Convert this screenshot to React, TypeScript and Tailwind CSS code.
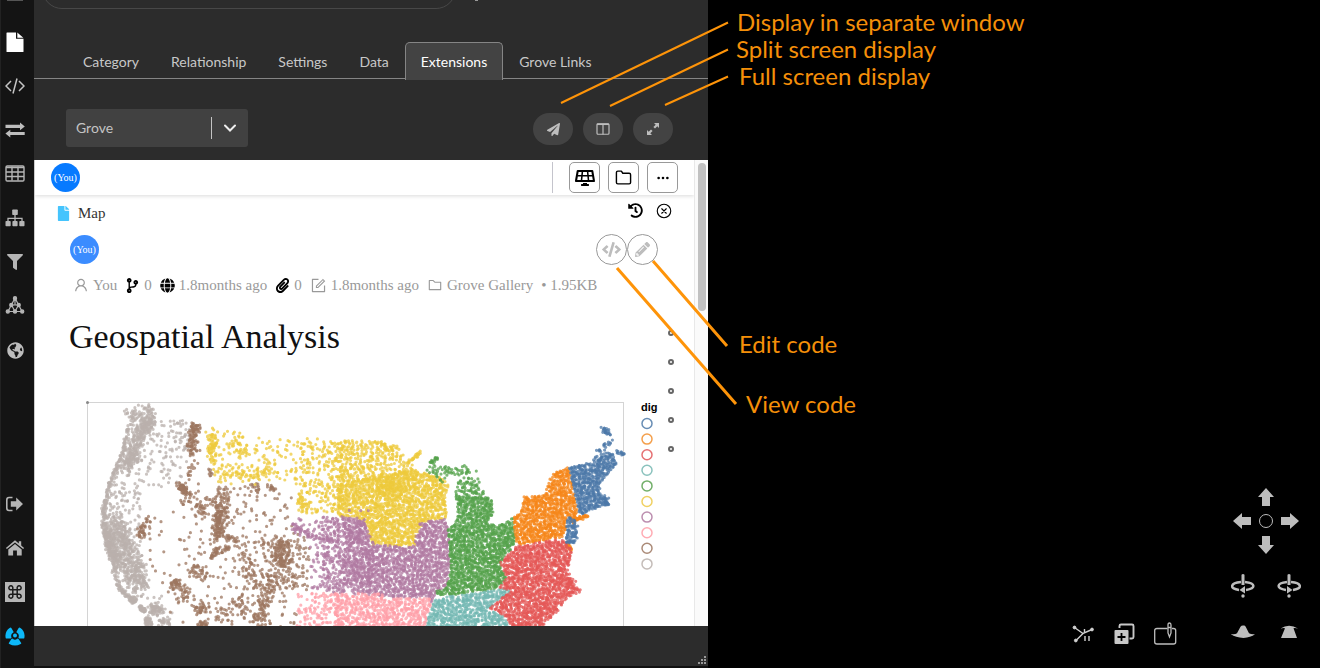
import { useMemo, useState } from "react";
import type { ReactNode } from "react";
import { AiOutlineFolder, AiOutlineForm, AiOutlineUser } from "react-icons/ai";
import { BsThreeDots } from "react-icons/bs";
import {
    FaCode,
    FaCodeBranch,
    FaFile,
    FaFilter,
    FaGlobe,
    FaGlobeAmericas,
    FaHistory,
    FaPaperclip,
    FaPaperPlane,
    FaPencilAlt,
    FaSolarPanel,
} from "react-icons/fa";
import { FiFolder } from "react-icons/fi";
import { IoCloseCircleOutline } from "react-icons/io5";

type Point = [number, number];

/* ---------- sidebar ---------- */

const sidebarTop: { label: string; icon: ReactNode }[] = [
    {
        label: "Document",
        icon: (
            <svg viewBox="0 0 20 20" className="size-5 fill-white">
                <path d="M2 .5h9v6.200h7.500V19.500q0 .5-.5.5H2q-.5 0-.5-.5V1q0-.5.5-.5z" />
                <path d="M12.300.5 18.300 5.700h-6z" />
            </svg>
        ),
    },
    {
        label: "Code",
        icon: (
            <svg viewBox="0 0 20 20" className="size-5 fill-none stroke-[#c4c4c4] stroke-[1.500]">
                <path d="M6 5 1 10l5 5M14 5l5 5-5 5M12 2.500 8 17.500" />
            </svg>
        ),
    },
    {
        label: "Exchange",
        icon: (
            <svg viewBox="0 0 20 20" className="size-5 fill-[#bdbdbd]">
                <path d="M.5 4.800h14.500V2.500l4.800 3.900-4.800 3.800V8H.5zM19.700 12H5.300V9.700L.4 13.500l4.900 3.900v-2.300h14.400z" />
            </svg>
        ),
    },
    {
        label: "Table",
        icon: (
            <svg viewBox="0 0 20 20" className="size-5 fill-none stroke-[#b5b5b5] stroke-[1.400]">
                <rect x="1" y="2" width="18" height="15" rx="1.200" />
                <path d="M1 3.500h18M1 8h18M1 12.500h18M7 2.500v14M13 2.500v14" />
            </svg>
        ),
    },
    {
        label: "Hierarchy",
        icon: (
            <svg viewBox="0 0 20 20" className="size-5 fill-[#b5b5b5]">
                <rect x="7.200" y="1.500" width="5.600" height="5.600" rx=".8" />
                <rect x=".5" y="13" width="5.200" height="5.200" rx=".8" />
                <rect x="7.400" y="13" width="5.200" height="5.200" rx=".8" />
                <rect x="14.300" y="13" width="5.200" height="5.200" rx=".8" />
                <path d="M10 7v6M3 13v-2.700h14V13" className="fill-none stroke-[#b5b5b5] stroke-[1.300]" />
            </svg>
        ),
    },
    { label: "Filter", icon: <FaFilter size={16} className="text-[#b5b5b5]" /> },
    {
        label: "Graph",
        icon: (
            <svg viewBox="0 0 20 20" className="size-5 fill-[#b5b5b5] stroke-[#b5b5b5] stroke-[1.200]">
                <path d="M10 2 3 15.500h14zM6.500 9h7M6.500 9l3.500 6.500L13.500 9M10 2v7" className="fill-none" />
                <circle cx="10" cy="2.300" r="1.600" />
                <circle cx="6.300" cy="9" r="1.600" />
                <circle cx="13.700" cy="9" r="1.600" />
                <circle cx="2.800" cy="15.500" r="1.600" />
                <circle cx="10" cy="15.500" r="1.600" />
                <circle cx="17.200" cy="15.500" r="1.600" />
            </svg>
        ),
    },
    { label: "Globe", icon: <FaGlobeAmericas size={17} className="text-[#bdbdbd]" /> },
];

const sidebarBottom: { label: string; icon: ReactNode }[] = [
    {
        label: "Sign out",
        icon: (
            <svg viewBox="0 0 20 20" className="size-5 fill-[#b5b5b5]">
                <path d="M7.500 3.500H4Q1.800 3.500 1.800 6v8q0 2.500 2.200 2.500h3.500" className="fill-none stroke-[#b5b5b5] stroke-[1.600]" />
                <path d="M5.800 7.300h5.400V3.500L18 10l-6.800 6.500v-3.800H5.800z" />
            </svg>
        ),
    },
    {
        label: "Home",
        icon: (
            <svg viewBox="0 0 20 20" className="size-5 fill-[#b5b5b5]">
                <path d="M10 2.300 13.800 5.400V3.300h2.400v4.200l2.900 2.400-1 1.200L10 4.500l-8.100 6.600-1-1.200z" />
                <path d="M10 5.900 16.700 11.400V17.500h-4.800v-5H8.100v5H3.300V11.400z" />
            </svg>
        ),
    },
    {
        label: "Shortcuts",
        icon: (
            <svg viewBox="0 0 20 20" className="size-5">
                <rect width="20" height="20" className="fill-[#b5b5b5]" />
                <path
                    d="M7.800 7.800h4.400v4.400H7.800zM7.800 7.800H6.300a2 2 0 1 1 1.500-1.500zM12.200 7.800V6.300a2 2 0 1 1 1.500 1.500zM12.200 12.200h1.500a2 2 0 1 1-1.500 1.500zM7.800 12.200v1.500a2 2 0 1 1-1.500-1.500z"
                    className="fill-none stroke-[#1a1a1a] stroke-[1.500]"
                />
            </svg>
        ),
    },
    {
        label: "Grove",
        icon: (
            <svg viewBox="0 0 20 20" className="size-5 fill-[#0db8f8] stroke-[#0db8f8] stroke-2" strokeLinejoin="round">
                <path d="M1.600 11.500A9 9 0 0 1 5.500 2.500L7.500 6A4.500 4.500 0 0 0 5.500 11.500z" />
                <path d="M18.400 11.500A9 9 0 0 0 14.500 2.500L12.500 6a4.500 4.500 0 0 1 2 5.500z" />
                <path d="M4.800 17.200q5.200 2.800 10.400 0L12.800 13.600a4.500 4.500 0 0 1-5.600 0z" />
                <circle cx="10" cy="9.600" r="1" />
            </svg>
        ),
    },
];

function SidebarButton({ label, children }: { label: string; children: ReactNode }) {
    return (
        <button aria-label={label} className="flex size-6 items-center justify-center">
            {children}
        </button>
    );
}

function Sidebar() {
    return (
        <aside className="flex flex-col justify-between border-l border-[#222] bg-[#141414] pr-[5px] pb-5">
            <div className="flex flex-col items-center gap-5">
                <span className="mb-[9px] h-px w-4 bg-[#555]" />
                {sidebarTop.map((item) => (
                    <SidebarButton key={item.label} label={item.label}>
                        {item.icon}
                    </SidebarButton>
                ))}
            </div>
            <div className="flex flex-col items-center gap-5">
                {sidebarBottom.map((item) => (
                    <SidebarButton key={item.label} label={item.label}>
                        {item.icon}
                    </SidebarButton>
                ))}
            </div>
        </aside>
    );
}

/* ---------- dot map ---------- */

type Region = {
    color: string;
    // outline, grid step in px, chance that a grid cell holds a dot at the west and east ends
    areas: { outline: Point[]; step: number; west: number; east: number }[];
    trails: { line: Point[]; spread: number; count: number }[];
};

const regions: Region[] = [
    {
        color: "#bab0ac",
        areas: [
            { outline: [[129, 414], [152, 416], [192, 422], [190, 450], [180, 487], [143, 490], [112, 484], [124, 450]], step: 4, west: 0.6, east: 0.42 },
            { outline: [[165, 418], [192, 422], [189, 450], [165, 455]], step: 4, west: 0.45, east: 0.9 },
            { outline: [[110, 482], [141, 486], [140, 523], [143, 557], [150, 590], [128, 590], [108, 543], [103, 507]], step: 3, west: 0.65, east: 0.3 },
            { outline: [[145, 594], [166, 595], [177, 607], [170, 626], [150, 622]], step: 4, west: 0.45, east: 0.35 },
        ],
        trails: [
            { line: [[128, 413], [133, 418], [146, 409], [150, 413], [146, 428]], spread: 7, count: 90 },
            { line: [[150, 420], [140, 432], [133, 452], [127, 467]], spread: 9, count: 340 },
            { line: [[128, 425], [123, 452], [110, 482], [104, 510]], spread: 2, count: 130 },
            { line: [[104, 500], [104, 528], [111, 555], [119, 588], [133, 601]], spread: 3, count: 220 },
            { line: [[130, 599], [135, 601]], spread: 4, count: 40 },
            { line: [[140, 607], [144, 611]], spread: 3, count: 30 },
            { line: [[147, 618], [149, 626]], spread: 4, count: 50 },
            { line: [[112, 520], [124, 540], [132, 566], [140, 588]], spread: 13, count: 480 },
            { line: [[107, 530], [117, 566]], spread: 7, count: 220 },
            { line: [[153, 607], [159, 612]], spread: 7, count: 70 },
            { line: [[158, 620], [168, 624]], spread: 6, count: 30 },
        ],
    },
    {
        color: "#9c755f",
        areas: [
            { outline: [[190, 487], [205, 500], [218, 488], [250, 484], [297, 490], [292, 520], [310, 540], [310, 590], [297, 592], [297, 628], [175, 628], [160, 596], [147, 580], [140, 520]], step: 5, west: 0.1, east: 0.5 },
            { outline: [[240, 540], [310, 535], [309, 588], [240, 590]], step: 4, west: 0.25, east: 0.5 },
            { outline: [[213, 490], [250, 486], [258, 520], [210, 530]], step: 4, west: 0.45, east: 0.2 },
            { outline: [[262, 535], [298, 535], [298, 592], [262, 592]], step: 3, west: 0.3, east: 0.35 },
        ],
        trails: [
            { line: [[196, 425], [193, 437], [190, 453]], spread: 6, count: 90 },
            { line: [[192, 430], [196, 462], [188, 475]], spread: 6, count: 35 },
            { line: [[209, 468], [211, 478]], spread: 2, count: 9 },
            { line: [[180, 486], [185, 490]], spread: 6, count: 55 },
            { line: [[187, 490], [200, 508], [210, 504]], spread: 13, count: 60 },
            { line: [[226, 492], [220, 510], [219, 538]], spread: 10, count: 110 },
            { line: [[219, 512], [219, 536]], spread: 5, count: 75 },
            { line: [[218, 548], [211, 558]], spread: 3, count: 30 },
            { line: [[222, 552], [229, 548]], spread: 2, count: 18 },
            { line: [[226, 538], [240, 541]], spread: 4, count: 22 },
            { line: [[255, 486], [258, 492]], spread: 6, count: 18 },
            { line: [[268, 487], [275, 489]], spread: 3, count: 14 },
            { line: [[141, 536], [146, 528]], spread: 7, count: 32 },
            { line: [[141, 530], [149, 518]], spread: 4, count: 12 },
            { line: [[175, 583], [178, 585]], spread: 7, count: 42 },
            { line: [[192, 570], [202, 573]], spread: 9, count: 42 },
            { line: [[178, 600], [188, 593]], spread: 8, count: 22 },
            { line: [[197, 608], [206, 609]], spread: 9, count: 36 },
            { line: [[200, 625], [206, 625]], spread: 4, count: 35 },
            { line: [[281, 545], [282, 565]], spread: 11, count: 120 },
            { line: [[272, 580], [263, 607], [256, 625]], spread: 11, count: 110 },
            { line: [[245, 552], [250, 570], [246, 588]], spread: 16, count: 55 },
            { line: [[236, 603], [245, 610]], spread: 10, count: 26 },
            { line: [[222, 600], [225, 622]], spread: 10, count: 22 },
        ],
    },
    {
        color: "#edc93b",
        areas: [
            { outline: [[200, 427], [240, 430], [253, 438], [280, 437], [310, 438], [310, 512], [297, 510], [297, 490], [277, 474], [220, 483], [213, 473], [210, 447]], step: 4, west: 0.55, east: 0.45 },
            { outline: [[300, 438], [345, 440], [345, 516], [300, 512]], step: 3, west: 0.4, east: 1 },
            { outline: [[340, 440], [377, 441], [400, 449], [407, 462], [417, 467], [417, 480], [380, 478], [340, 490]], step: 2.3, west: 0.85, east: 0.5 },
            { outline: [[338, 486], [380, 474], [415, 470], [440, 477], [449, 485], [445, 497], [447, 518], [422, 522], [422, 528], [415, 537], [415, 546], [371, 546], [366, 523], [357, 518], [338, 516]], step: 1.8, west: 0.8, east: 0.85 },
        ],
        trails: [
            { line: [[213, 435], [212, 460]], spread: 5, count: 60 },
            { line: [[220, 472], [250, 475], [275, 470]], spread: 11, count: 80 },
            { line: [[235, 440], [242, 452]], spread: 9, count: 30 },
            { line: [[300, 495], [304, 510]], spread: 6, count: 30 },
            { line: [[378, 444], [400, 450]], spread: 5, count: 25 },
            { line: [[406, 464], [421, 452]], spread: 2, count: 26 },
            { line: [[380, 488], [400, 488]], spread: 12, count: 120 },
        ],
    },
    {
        color: "#b07aa1",
        areas: [
            { outline: [[293, 517], [333, 517], [333, 592], [310, 590], [310, 540], [293, 533]], step: 4, west: 0.4, east: 1 },
            { outline: [[322, 517], [357, 518], [366, 523], [371, 546], [371, 596], [322, 592]], step: 2.2, west: 0.45, east: 0.9 },
            { outline: [[368, 545], [415, 546], [415, 537], [422, 528], [418, 522], [447, 519], [449, 533], [450, 570], [447, 587], [438, 590], [432, 603], [428, 597], [383, 598], [368, 592]], step: 1.9, west: 0.8, east: 0.88 },
        ],
        trails: [
            { line: [[293, 526], [312, 537], [340, 541]], spread: 3, count: 70 },
            { line: [[350, 522], [360, 545], [355, 585]], spread: 20, count: 240 },
        ],
    },
    {
        color: "#ff9da7",
        areas: [
            { outline: [[298, 593], [340, 593], [340, 628], [297, 628]], step: 3, west: 0.55, east: 1 },
            { outline: [[335, 593], [383, 594], [383, 599], [430, 598], [432, 604], [424, 628], [335, 628]], step: 2, west: 0.75, east: 0.8 },
        ],
        trails: [],
    },
    {
        color: "#54a24b",
        areas: [
            { outline: [[422, 470], [432, 463], [438, 465], [453, 467], [467, 465], [477, 471], [463, 475], [447, 476], [443, 484], [435, 475]], step: 2.6, west: 0.8, east: 0.8 },
            { outline: [[455, 490], [458, 482], [465, 477], [478, 478], [483, 490], [487, 498], [456, 500]], step: 2.3, west: 0.85, east: 0.85 },
            { outline: [[456, 498], [487, 496], [492, 500], [493, 513], [488, 523], [497, 526], [513, 518], [516, 543], [500, 563], [507, 578], [497, 589], [435, 597], [437, 590], [447, 587], [451, 570], [448, 530], [455, 523], [458, 513]], step: 1.7, west: 0.86, east: 0.88 },
        ],
        trails: [{ line: [[431, 463], [438, 457]], spread: 2, count: 16 }],
    },
    {
        color: "#72b7b2",
        areas: [
            { outline: [[435, 598], [497, 590], [512, 587], [511, 592], [493, 603], [491, 610], [505, 617], [510, 628], [425, 628], [432, 605]], step: 1.9, west: 0.82, east: 0.88 },
        ],
        trails: [],
    },
    {
        color: "#f58518",
        areas: [
            { outline: [[513, 518], [523, 507], [523, 497], [545, 495], [547, 483], [555, 472], [569, 467], [578, 513], [573, 523], [567, 518], [567, 527], [563, 537], [517, 545]], step: 1.7, west: 0.9, east: 0.86 },
        ],
        trails: [
            { line: [[574, 521], [588, 515]], spread: 3, count: 40 },
            { line: [[566, 543], [571, 550]], spread: 2, count: 25 },
        ],
    },
    {
        color: "#e45756",
        areas: [
            { outline: [[517, 546], [563, 538], [572, 550], [567, 573], [577, 590], [563, 603], [557, 612], [543, 625], [510, 628], [507, 617], [490, 608], [503, 597], [512, 590], [498, 588], [507, 578], [500, 563]], step: 1.7, west: 0.84, east: 0.86 },
        ],
        trails: [{ line: [[566, 575], [576, 592]], spread: 6, count: 35 }],
    },
    {
        color: "#4c78a8",
        areas: [
            { outline: [[569, 467], [580, 465], [593, 462], [606, 453], [613, 453], [617, 463], [600, 483], [600, 493], [610, 497], [607, 505], [597, 508], [580, 516]], step: 1.7, west: 1, east: 0.85 },
            { outline: [[567, 517], [573, 518], [578, 525], [578, 537], [573, 546], [566, 542]], step: 1.8, west: 1, east: 1 },
        ],
        trails: [
            { line: [[603, 428], [606, 431], [610, 434]], spread: 3, count: 22 },
            { line: [[612, 440], [606, 446], [599, 452], [594, 460]], spread: 6, count: 26 },
            { line: [[616, 452], [623, 453]], spread: 3, count: 14 },
            { line: [[600, 498], [610, 504]], spread: 3, count: 20 },
        ],
    },
];

const legendColors = ["#4e79a7", "#f28e2b", "#e15759", "#76b7b2", "#59a14f", "#edc948", "#b07aa1", "#ff9da7", "#9c755f", "#bab0ac"];

function inside([x, y]: Point, outline: Point[]) {
    let hit = false;
    for (let i = 0, j = outline.length - 1; i < outline.length; j = i++) {
        const [xi, yi] = outline[i];
        const [xj, yj] = outline[j];
        if (yi > y !== yj > y && x < ((xj - xi) * (y - yi)) / (yj - yi) + xi) hit = !hit;
    }
    return hit;
}

// small seeded generator, so the dots stay put between renders
function createRandom(seed: number) {
    let state = seed;
    return () => {
        state = (state * 1664525 + 1013904223) % 4294967296;
        return state / 4294967296;
    };
}

const LAYERS = 6;

// each layer is one path of zero-length round strokes; overlapping layers build up the colour
function buildLayers(region: Region, seed: number) {
    const random = createRandom(seed);
    const layers: string[] = Array(LAYERS).fill("");
    const addDot = (x: number, y: number) => {
        layers[Math.floor(random() * LAYERS)] += `M${x.toFixed(1)} ${y.toFixed(1)}h0`;
    };

    region.areas.forEach(({ outline, step, west, east }) => {
        const xs = outline.map((p) => p[0]);
        const ys = outline.map((p) => p[1]);
        const left = Math.min(...xs);
        const right = Math.max(...xs);
        for (let y = Math.min(...ys); y < Math.max(...ys); y += step) {
            for (let x = left; x < right; x += step) {
                const chance = west + ((east - west) * (x - left)) / (right - left);
                const dot: Point = [x + (random() - 0.5) * step * 2, y + (random() - 0.5) * step * 2];
                if (random() < chance && inside(dot, outline)) addDot(...dot);
            }
        }
    });

    region.trails.forEach(({ line, spread, count }) => {
        for (let i = 0; i < count; i++) {
            const t = random() * (line.length - 1);
            const k = Math.floor(t);
            const [x1, y1] = line[k];
            const [x2, y2] = line[k + 1];
            const dx = (random() + random() - 1) * spread;
            const dy = (random() + random() - 1) * spread;
            addDot(x1 + (x2 - x1) * (t - k) + dx, y1 + (y2 - y1) * (t - k) + dy);
        }
    });

    return layers;
}

function DotMap() {
    const layers = useMemo(() => regions.map((region, i) => buildLayers(region, 97 + i * 31)), []);

    return (
        <svg viewBox="85 400 575 340" className="h-[340px] w-[575px] shrink-0" role="img" aria-label="Map of the United States by dig">
            <rect x="87.500" y="402.500" width="536" height="336" className="fill-white stroke-[#d4d4d4]" />
            <circle cx="87.500" cy="402.500" r="1.500" className="fill-[#888]" />
            {regions.map((region, i) => (
                <g key={region.color} fill="none" stroke={region.color} strokeWidth="3.200" strokeLinecap="round" strokeOpacity="0.75">
                    {layers[i].map((d, j) => (
                        <path key={j} d={d} />
                    ))}
                </g>
            ))}
            <text x="641" y="411" className="fill-black font-['Liberation_Sans',sans-serif] text-[11px] font-bold">
                dig
            </text>
            {legendColors.map((color, i) => (
                <circle key={color} cx="647" cy={423.5 + i * 15.6} r="5" fill="none" stroke={color} strokeWidth="1.500" strokeOpacity="0.85" />
            ))}
        </svg>
    );
}

/* ---------- embedded page ---------- */

function Avatar({ className }: { className: string }) {
    return (
        <span className={`flex size-[29px] shrink-0 items-center justify-center rounded-full text-[10px] text-white ${className}`}>(You)</span>
    );
}

function ToolButton({ label, children }: { label: string; children: ReactNode }) {
    return (
        <button aria-label={label} className="flex size-[31px] items-center justify-center rounded-[5px] border border-[#999] text-black">
            {children}
        </button>
    );
}

function RoundButton({ label, children }: { label: string; children: ReactNode }) {
    return (
        <button aria-label={label} className="flex size-[31px] items-center justify-center rounded-full border border-[#999] text-[#bdbdbd]">
            {children}
        </button>
    );
}

function EmbeddedPage() {
    return (
        <div className="flex min-h-0 flex-1 overflow-hidden border-l border-[#ccc] bg-white font-['Liberation_Serif',serif]">
            <div className="flex min-w-0 flex-1 flex-col overflow-hidden">
                <header className="flex h-[35px] shrink-0 items-center justify-between px-4 shadow-[0_1px_4px_rgba(0,0,0,0.15)]">
                    <Avatar className="bg-[#077aff]" />
                    <div className="flex items-center gap-2">
                        <span className="mr-2 h-[31px] w-px bg-[#c4c4cc]" />
                        <ToolButton label="Dashboard">
                            <FaSolarPanel size={20} />
                        </ToolButton>
                        <ToolButton label="Folders">
                            <FiFolder size={17} />
                        </ToolButton>
                        <ToolButton label="More">
                            <BsThreeDots size={14} />
                        </ToolButton>
                    </div>
                </header>

                <div className="flex h-[35px] shrink-0 items-center justify-between pr-[21px] pl-[22px]">
                    <div className="flex items-center gap-2 pt-[2px] text-[15px] text-[#333]">
                        <FaFile size={15} className="w-[13px] text-[#45c4fd]" />
                        Map
                    </div>
                    <div className="flex items-center gap-3 pb-1 text-black">
                        <button aria-label="History">
                            <FaHistory size={15} />
                        </button>
                        <button aria-label="Close">
                            <IoCloseCircleOutline size={18} />
                        </button>
                    </div>
                </div>

                <div className="mt-1 flex h-[31px] shrink-0 items-center justify-between pr-9 pl-[35px]">
                    <Avatar className="bg-[#3b8cff]" />
                    <div className="flex">
                        <RoundButton label="View code">
                            <FaCode size={19} />
                        </RoundButton>
                        <RoundButton label="Edit code">
                            <FaPencilAlt size={15} />
                        </RoundButton>
                    </div>
                </div>

                <div className="mt-2 flex h-6 shrink-0 items-center gap-2 pl-[38px] text-[15px] leading-5 whitespace-nowrap text-[#999]">
                    <span className="flex items-center gap-1">
                        <AiOutlineUser size={16} /> You
                    </span>
                    <span className="flex items-center gap-1">
                        <FaCodeBranch size={15} className="text-black" /> 0
                    </span>
                    <span className="flex items-center gap-1">
                        <FaGlobe size={15} className="text-black" /> 1.8months ago
                    </span>
                    <span className="flex items-center gap-1">
                        <FaPaperclip size={15} className="text-black" /> 0
                    </span>
                    <span className="flex items-center gap-1">
                        <AiOutlineForm size={17} /> 1.8months ago
                    </span>
                    <span className="flex items-center gap-1">
                        <AiOutlineFolder size={16} /> Grove Gallery
                    </span>
                    <span>• 1.95KB</span>
                </div>

                <div className="flex min-h-0 flex-1 justify-between overflow-hidden pr-5">
                    <div className="min-w-0">
                        <h1 className="mt-5 ml-[34px] text-[34px] leading-10 text-[#111]">Geospatial Analysis</h1>
                        <div className="mt-[43px] ml-[50px]">
                            <DotMap />
                        </div>
                    </div>
                    <nav aria-label="Sections" className="flex shrink-0 flex-col gap-[23px] pt-[33px]">
                        {[1, 2, 3, 4, 5].map((n) => (
                            <a key={n} href={`#section-${n}`} aria-label={`Section ${n}`} className="block size-[6px] rounded-full border-2 border-[#666]" />
                        ))}
                    </nav>
                </div>
            </div>

            <div className="w-[14px] shrink-0 border-l border-[#e8e8e8] bg-[#fafafa] pt-[3px] pl-[3px]">
                <div className="h-[148px] w-2 rounded-full bg-[#c1c1c1]" />
            </div>
        </div>
    );
}

/* ---------- left panel ---------- */

const tabs = ["Category", "Relationship", "Settings", "Data", "Extensions", "Grove Links"];

function PillButton({ label, children }: { label: string; children: ReactNode }) {
    return (
        <button aria-label={label} className="flex h-8 w-10 items-center justify-center rounded-full bg-[#434343] text-[#bdbdbd]">
            {children}
        </button>
    );
}

function Panel() {
    const [active, setActive] = useState("Extensions");

    return (
        <section className="flex min-w-0 flex-col overflow-hidden bg-[#2c2c2c] font-[Lato,sans-serif]">
            <div className="flex h-[9px] shrink-0 items-end overflow-hidden pl-2">
                <input aria-label="Search" className="h-10 w-[414px] shrink-0 rounded-full border border-[#484848] bg-transparent px-4 text-sm text-[#c4c4c4]" />
                <span className="ml-[19px] h-px w-[3px] self-start bg-[#999]" />
            </div>

            <div role="tablist" className="mt-[33px] flex h-[37px] shrink-0 border-b border-[#858585] pl-[33px]">
                {tabs.map((tab) => (
                    <button
                        key={tab}
                        role="tab"
                        aria-selected={tab === active}
                        onClick={() => setActive(tab)}
                        className={`h-[38px] rounded-t-[5px] border border-b-0 px-[15px] text-sm ${
                            tab === active ? "border-[#858585] bg-[#434343] text-white" : "border-transparent text-[#c8c8c8]"
                        }`}
                    >
                        {tab}
                    </button>
                ))}
            </div>

            <div className="flex h-[81px] shrink-0 items-center justify-between pt-[17px] pr-[35px] pl-8">
                <div className="relative">
                    <select aria-label="Extension" className="h-[38px] w-[182px] appearance-none rounded-[3px] bg-[#414141] pl-[10px] text-sm text-[#c4c4c4]">
                        <option>Grove</option>
                    </select>
                    <span className="pointer-events-none absolute inset-y-0 right-0 flex items-center gap-3 pr-3">
                        <span className="h-[22px] w-px bg-[#c4c4c4]" />
                        <svg viewBox="0 0 12 8" className="h-2 w-3 fill-none stroke-[#eee] stroke-2">
                            <path d="M1 1.500 6 6.500 11 1.500" strokeLinecap="round" />
                        </svg>
                    </span>
                </div>
                <div className="flex gap-[10px] pt-[2px]">
                    <PillButton label="Display in separate window">
                        <FaPaperPlane size={13} />
                    </PillButton>
                    <PillButton label="Split screen display">
                        <svg viewBox="0 0 14 12" className="h-3 w-[14px] fill-none stroke-[#bdbdbd]">
                            <rect x="1" y=".75" width="12" height="10.500" rx="1" strokeWidth="1.200" />
                            <path d="M7 1v10.500" strokeWidth="1.200" />
                            <path d="M1 1.300h12" strokeWidth="1.500" />
                        </svg>
                    </PillButton>
                    <PillButton label="Full screen display">
                        <svg viewBox="0 0 14 14" className="size-[14px] fill-[#bdbdbd]">
                            <path d="M8 1h5v5l-1.700-1.700L9 6.600 7.400 5l2.300-2.300zM6 13H1V8l1.700 1.700L5 7.400 6.600 9l-2.300 2.300z" />
                        </svg>
                    </PillButton>
                </div>
            </div>

            <EmbeddedPage />

            <footer className="flex h-[42px] shrink-0 items-end justify-end border-b-2 border-[#111] pr-[2px] pb-[2px]">
                <svg viewBox="0 0 8 8" className="size-2 fill-[#999]">
                    <path d="M6 0h2v2H6zM3 3h2v2H3zM6 3h2v2H6zM0 6h2v2H0zM3 6h2v2H3zM6 6h2v2H6z" />
                </svg>
            </footer>
        </section>
    );
}

/* ---------- 3d view ---------- */

const callouts = [
    { text: "Display in separate window", place: "left-[29px] top-[7px]" },
    { text: "Split screen display", place: "left-[28px] top-[34px]" },
    { text: "Full screen display", place: "left-[31px] top-[61px]" },
    { text: "Edit code", place: "left-[31px] top-[329px]" },
    { text: "View code", place: "left-[38px] top-[389px]" },
];

function Callouts() {
    return (
        <div className="pointer-events-none absolute inset-0">
            <svg className="absolute top-0 left-0 size-px overflow-visible stroke-[#fe9409]">
                <path d="M20 22.500-147 103M20 49.500-98 106M20 76.500-43 105" strokeWidth="2" />
                <path d="M19 346-55 261M28 404-91 268" strokeWidth="3" />
            </svg>
            {callouts.map((callout) => (
                <p key={callout.text} className={`absolute font-[Lato,sans-serif] text-2xl leading-[30px] whitespace-nowrap text-[#f58f09] ${callout.place}`}>
                    {callout.text}
                </p>
            ))}
        </div>
    );
}

function ArrowIcon({ className }: { className: string }) {
    return (
        <svg viewBox="0 0 18 18" className={`size-[18px] fill-[#bdbdbd] ${className}`}>
            <path d="M9 0 17 9h-4v9H5V9H1z" />
        </svg>
    );
}

function RotateIcon({ className }: { className: string }) {
    return (
        <svg viewBox="0 0 24 24" className={`size-6 fill-[#bdbdbd] ${className}`}>
            <path d="M10.500.8q1.500-1.400 3 0V11h-3z" />
            <path d="M10 8C-1.500 9-1.500 15 8 15.900M14 8c11 1 11 6.800 1 7.900" className="fill-none stroke-[#bdbdbd] stroke-[2.500]" />
            <path d="M8.500 15.900 14 12V19.600z" />
            <circle cx="12" cy="22" r="1.700" />
        </svg>
    );
}

function Viewport() {
    return (
        <main className="relative flex min-w-0 items-end justify-end bg-black pr-[19px] pb-[22px]">
            <Callouts />
            <div className="mr-[54px] flex items-center gap-[17px]">
                <button aria-label="Toggle links" className="size-6">
                    <svg viewBox="0 0 24 24" className="size-6 fill-[#d0d0d0] stroke-[#d0d0d0]">
                        <path d="M3.500 5.500 12 11.500 21 7.500M12 11.500 5 18.500" className="fill-none stroke-[1.400]" />
                        <circle cx="3.500" cy="5.500" r="1.400" />
                        <circle cx="21" cy="7.500" r="1.400" />
                        <circle cx="4.800" cy="18.500" r="1.400" />
                        <path d="M13.500 7v3M14 14v5M18 14v5" className="stroke-[1.400]" />
                    </svg>
                </button>
                <button aria-label="Add copy" className="size-6">
                    <svg viewBox="0 0 24 24" className="size-6">
                        <path d="M7.500 6V4Q7.500 2.500 9 2.500h11q1.500 0 1.500 1.500v11q0 1.500-1.500 1.500h-2.500" className="fill-none stroke-[#c8c8c8] stroke-[1.900]" />
                        <rect x="2.500" y="8" width="14" height="14" rx="1" className="fill-[#c8c8c8]" />
                        <path d="M9.500 11v8M5.500 15h8" className="stroke-black stroke-[1.800]" />
                    </svg>
                </button>
                <button aria-label="Edit canvas" className="size-6">
                    <svg viewBox="0 0 24 24" className="size-6 fill-none stroke-[#bdbdbd] stroke-[1.300]">
                        <path d="M14.500 6.500H4Q1.700 6.500 1.700 8.500v11.500q0 2 2.300 2h16.500q2.200 0 2.200-2V8.500q0-2-2.200-2h-1.500" />
                        <path d="M16.500 1q1.500 0 1.500 2v8l-1.500 4L15 11V3q0-2 1.500-2zM15 5.500h3" />
                    </svg>
                </button>
            </div>
            <div className="flex flex-col items-center pb-[2px]">
                <div className="grid grid-cols-3 place-items-center gap-[6px]">
                    <button aria-label="Pan up" className="col-start-2">
                        <ArrowIcon className="" />
                    </button>
                    <button aria-label="Pan left" className="col-start-1">
                        <ArrowIcon className="-rotate-90" />
                    </button>
                    <button aria-label="Reset view" className="size-[14px] rounded-full border border-[#bdbdbd]" />
                    <button aria-label="Pan right">
                        <ArrowIcon className="rotate-90" />
                    </button>
                    <button aria-label="Pan down" className="col-start-2">
                        <ArrowIcon className="rotate-180" />
                    </button>
                </div>
                <div className="mt-5 flex gap-[22px]">
                    <button aria-label="Rotate left">
                        <RotateIcon className="" />
                    </button>
                    <button aria-label="Rotate right">
                        <RotateIcon className="-scale-x-100" />
                    </button>
                </div>
                <div className="mt-[22px] flex gap-[22px]">
                    <button aria-label="Tilt down">
                        <svg viewBox="0 0 24 24" className="size-6 fill-[#bdbdbd]">
                            <path d="M12 5.500h1q1 0 1.700 1.200l3.300 6.500Q21 15 24.500 14q-4.500 3.500-12 4Q4 17.500-.5 14 4 15 6 13.200L9.500 6.700Q10.300 5.500 12 5.500z" />
                        </svg>
                    </button>
                    <button aria-label="Tilt up">
                        <svg viewBox="0 0 24 24" className="size-6 fill-[#bdbdbd]">
                            <path d="M3.500 8.500Q12 3 21 8.500 18 7.700 16.500 8.200L20 18H4L8 8.200Q6.500 7.700 3.500 8.500z" />
                        </svg>
                    </button>
                </div>
            </div>
        </main>
    );
}

export default function App() {
    return (
        <div className="grid h-screen grid-cols-[34px_674fr_612fr] overflow-hidden bg-black">
            <Sidebar />
            <Panel />
            <Viewport />
        </div>
    );
}
